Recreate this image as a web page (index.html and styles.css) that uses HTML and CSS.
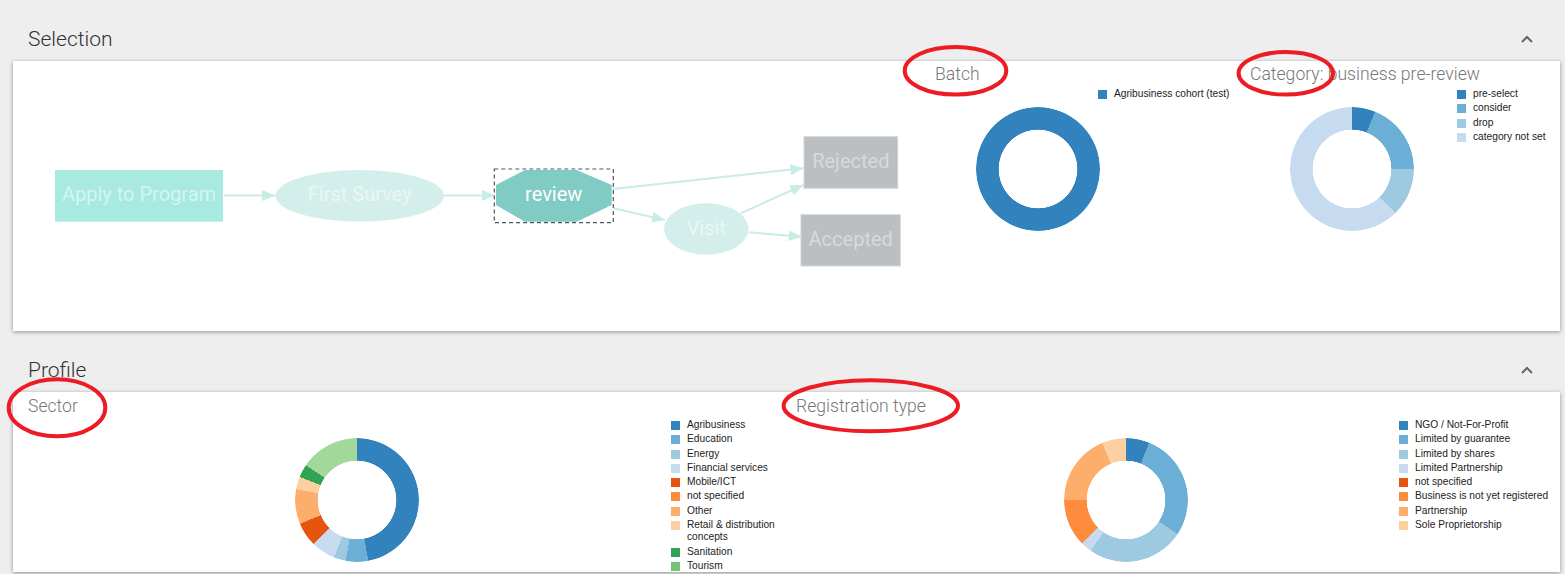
FILE: index.html
```html
<!DOCTYPE html>
<html>
<head>
<meta charset="utf-8">
<title>Selection</title>
<link rel="stylesheet" href="styles.css">
</head>
<body>
<section class="section">
  <header class="sec-head">
    <h2>Selection</h2>
    <svg class="chev" viewBox="0 0 12 8"><path d="M1 7 L6 2 L11 7" /></svg>
  </header>
  <div class="card card-sel">
    <svg class="flow" viewBox="0 0 900 270">
      <defs>
        <marker id="arr" markerUnits="userSpaceOnUse" markerWidth="14" markerHeight="11" refX="13" refY="5.5" orient="auto">
          <path d="M0 0 L13 5.5 L0 11 Z" fill="#c9ece7"/>
        </marker>
      </defs>
      <g class="edges">
        <line x1="211" y1="134.5" x2="262" y2="134.5" marker-end="url(#arr)"/>
        <line x1="431" y1="134.5" x2="482" y2="134.5" marker-end="url(#arr)"/>
        <line x1="600" y1="128" x2="790.3" y2="107.3" marker-end="url(#arr)"/>
        <line x1="600.3" y1="147.3" x2="652" y2="159" marker-end="url(#arr)"/>
        <line x1="727.7" y1="152.3" x2="790.3" y2="124" marker-end="url(#arr)"/>
        <line x1="735.7" y1="171.3" x2="788.7" y2="175.7" marker-end="url(#arr)"/>
      </g>
      <rect class="n-apply" x="42" y="109" width="168" height="51.7"/>
      <text class="t-apply" x="126" y="135">Apply to Program</text>
      <ellipse class="n-soft" cx="346.7" cy="134.8" rx="84.3" ry="25.8"/>
      <text class="t-soft" x="346.7" y="135">First Survey</text>
      <polygon class="n-review" points="512,109 563.7,109 598.7,124 598.7,144 563.7,160.7 512,160.7 483,144 483,124"/>
      <rect class="n-focus" x="481.3" y="108" width="119" height="53.7"/>
      <text class="t-review" x="540.7" y="134.5">review</text>
      <ellipse class="n-soft" cx="693.3" cy="168" rx="42.3" ry="25.7"/>
      <text class="t-soft" x="693.3" y="168.5">Visit</text>
      <rect class="n-end" x="791" y="75.7" width="93.7" height="51.6"/>
      <text class="t-end" x="837.8" y="102">Rejected</text>
      <rect class="n-end" x="788" y="153.7" width="99.3" height="51.3"/>
      <text class="t-end" x="837.7" y="179.8">Accepted</text>
    </svg>

    <div class="chart chart-batch">
      <h3 class="chart-title">Batch</h3>
      <div class="chart-body">
        <div class="donut donut-batch" style="background: conic-gradient(#3182bd 0deg 360deg);"></div>
        <ul class="legend legend-batch">
          <li><span class="sw c1"></span><span>Agribusiness cohort (test)</span></li>
        </ul>
      </div>
    </div>

    <div class="chart chart-cat">
      <h3 class="chart-title">Category: business pre-review</h3>
      <div class="chart-body">
        <div class="donut donut-cat" style="background: conic-gradient(#3182bd 0deg 21.8deg, #6baed6 21.8deg 90deg, #9ecae1 90deg 135.5deg, #c6dbef 135.5deg 360deg);"></div>
        <ul class="legend legend-cat">
          <li><span class="sw c1"></span><span>pre-select</span></li>
          <li><span class="sw c2"></span><span>consider</span></li>
          <li><span class="sw c3"></span><span>drop</span></li>
          <li><span class="sw c4"></span><span>category not set</span></li>
        </ul>
      </div>
    </div>
  </div>
</section>

<section class="section">
  <header class="sec-head">
    <h2>Profile</h2>
    <svg class="chev" viewBox="0 0 12 8"><path d="M1 7 L6 2 L11 7" /></svg>
  </header>
  <div class="card card-prof">
    <div class="pchart pchart-sector">
      <h3 class="chart-title">Sector</h3>
      <div class="chart-body">
        <div class="donut donut-sector" style="background: conic-gradient(#3182bd 0deg 169.4deg, #6baed6 169.4deg 190.6deg, #9ecae1 190.6deg 201.8deg, #c6dbef 201.8deg 224.7deg, #e6550d 224.7deg 247.3deg, #fdae6b 247.3deg 280deg, #fdd0a2 280deg 292deg, #31a354 292deg 304.3deg, #a1d99b 304.3deg 360deg);"></div>
        <ul class="legend legend-sector">
          <li><span class="sw c1"></span><span>Agribusiness</span></li>
          <li><span class="sw c2"></span><span>Education</span></li>
          <li><span class="sw c3"></span><span>Energy</span></li>
          <li><span class="sw c4"></span><span>Financial services</span></li>
          <li><span class="sw c5"></span><span>Mobile/ICT</span></li>
          <li><span class="sw c6"></span><span>not specified</span></li>
          <li><span class="sw c7"></span><span>Other</span></li>
          <li><span class="sw c8"></span><span>Retail &amp; distribution concepts</span></li>
          <li><span class="sw c9"></span><span>Sanitation</span></li>
          <li><span class="sw c10"></span><span>Tourism</span></li>
        </ul>
      </div>
    </div>
    <div class="pchart pchart-reg">
      <h3 class="chart-title">Registration type</h3>
      <div class="chart-body">
        <div class="donut donut-reg" style="background: conic-gradient(#3182bd 0deg 22deg, #6baed6 22deg 123.3deg, #9ecae1 123.3deg 214.8deg, #c6dbef 214.8deg 225.3deg, #fd8d3c 225.3deg 270deg, #fdae6b 270deg 337.3deg, #fdd0a2 337.3deg 360deg);"></div>
        <ul class="legend legend-reg">
          <li><span class="sw c1"></span><span>NGO / Not-For-Profit</span></li>
          <li><span class="sw c2"></span><span>Limited by guarantee</span></li>
          <li><span class="sw c3"></span><span>Limited by shares</span></li>
          <li><span class="sw c4"></span><span>Limited Partnership</span></li>
          <li><span class="sw c5"></span><span>not specified</span></li>
          <li><span class="sw c6"></span><span>Business is not yet registered</span></li>
          <li><span class="sw c7"></span><span>Partnership</span></li>
          <li><span class="sw c8"></span><span>Sole Proprietorship</span></li>
        </ul>
      </div>
    </div>
  </div>
</section>

<svg class="annot" viewBox="0 0 1565 574">
  <ellipse cx="955.5" cy="70.8" rx="50.8" ry="23.8"/>
  <ellipse cx="1285.8" cy="73.3" rx="47.2" ry="21.3"/>
  <ellipse cx="57" cy="407.8" rx="48.3" ry="28.5"/>
  <ellipse cx="870.8" cy="405.8" rx="87.2" ry="25.5"/>
</svg>
</body>
</html>
```

FILE: styles.css
```css
* { box-sizing: border-box; }
html, body { margin: 0; padding: 0; }
body {
  background: #eeeeee;
  font-family: Roboto, "Liberation Sans", Arial, sans-serif;
  width: 1565px;
  height: 574px;
  overflow: hidden;
  position: relative;
}

.sec-head {
  height: 61px;
  display: flex;
  align-items: center;
  justify-content: space-between;
  padding: 17px 32px 0 28px;
}
.sec-head h2 {
  margin: 0;
  font-weight: 300;
  font-size: 21px;
  line-height: 28px;
  color: #333;
}
.chev { width: 12px; height: 8px; display: block; }
.chev path { fill: none; stroke: #666; stroke-width: 2; }

.card {
  margin: 0 5px 0 13px;
  background: #fff;
  box-shadow: 0 1px 4px rgba(0, 0, 0, 0.4);
  display: flex;
}
.card-sel { height: 270px; }
.card-prof { height: 180px; }

/* flow diagram */
.flow { width: 900px; height: 270px; flex: none; display: block; }
.flow text {
  font-family: Roboto, "Liberation Sans", sans-serif;
  font-size: 20px;
  text-anchor: middle;
  dominant-baseline: middle;
}
.edges line { stroke: #c9ece7; stroke-width: 2; }
.n-apply { fill: #a8e9e0; }
.t-apply { fill: #d5f5f0; }
.n-soft { fill: #d4eeeb; }
.t-soft { fill: #e9f7f5; }
.n-review { fill: #80cbc4; }
.t-review { fill: #ffffff; }
.n-focus { fill: none; stroke: #4e5861; stroke-width: 1.2; stroke-dasharray: 4 3; }
.n-end { fill: #bbbfc2; stroke: #d3d6d8; stroke-width: 1; }
.t-end { fill: #d6d9db; }

/* charts */
.chart { display: flex; flex-direction: column; }
.chart-batch { margin-left: 22px; width: 315px; flex: none; }
.chart-cat { flex: 1; }
.chart-title {
  margin: 0;
  font-weight: 300;
  font-size: 17.6px;
  line-height: 26px;
  color: #777;
  white-space: nowrap;
}
.chart-body { display: flex; align-items: flex-start; }

.donut {
  width: 124px;
  height: 124px;
  border-radius: 50%;
  flex: none;
  -webkit-mask: radial-gradient(circle at center, transparent 39px, #000 39.6px);
  mask: radial-gradient(circle at center, transparent 39px, #000 39.6px);
}
.donut-batch { margin: 20px 0 0 41px; }
.donut-cat { margin: 20px 0 0 40px; }

.legend {
  list-style: none;
  margin: 0;
  padding: 0;
  display: flex;
  flex-direction: column;
  gap: 2px;
  font-family: "Liberation Sans", Arial, sans-serif;
  font-size: 10.2px;
  line-height: 12.3px;
  color: #222;
}
.legend li { display: flex; gap: 7px; }
.sw { width: 9px; height: 9px; flex: none; margin-top: 2px; }
.legend-batch { margin: 1px 0 0 -2px; }
.legend-cat { margin: 1px 0 0 43px; }

.c1 { background: #3182bd; }
.c2 { background: #6baed6; }
.c3 { background: #9ecae1; }
.c4 { background: #c6dbef; }
.c5 { background: #e6550d; }
.c6 { background: #fd8d3c; }
.c7 { background: #fdae6b; }
.c8 { background: #fdd0a2; }
.c9 { background: #31a354; }
.c10 { background: #74c476; }

/* profile */
.pchart { display: flex; flex-direction: column; padding-left: 15px; }
.pchart .chart-title { line-height: 28px; }
.pchart-sector { width: 768px; flex: none; }
.pchart-reg { flex: 1; }
.donut-sector { margin: 18px 0 0 267px; }
.donut-reg { margin: 18px 0 0 268px; }
.legend-sector { margin: -1px 0 0 252px; }
.legend-sector li span:last-child { max-width: 100px; }
.legend-reg { margin: -1px 0 0 211px; }

/* hand-drawn annotation marks */
.annot {
  position: absolute;
  left: 0;
  top: 0;
  width: 1565px;
  height: 574px;
  pointer-events: none;
}
.annot ellipse { fill: none; stroke: #ed1c24; stroke-width: 4; }
```
